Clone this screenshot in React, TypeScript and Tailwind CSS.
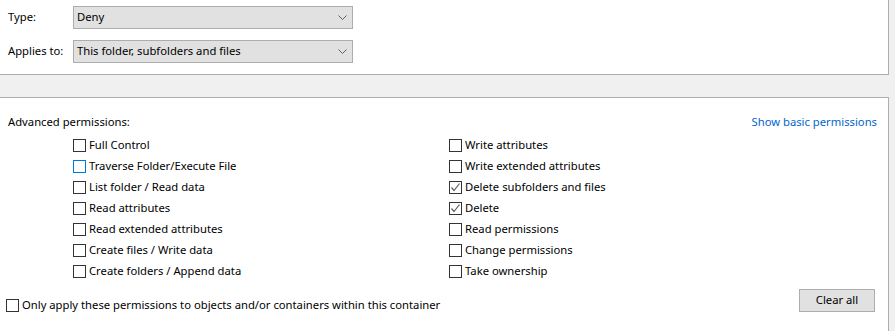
type Perm = { label: string; checked?: boolean; focused?: boolean };

const leftPerms: Perm[] = [
  { label: 'Full Control' },
  { label: 'Traverse Folder/Execute File', focused: true },
  { label: 'List folder / Read data' },
  { label: 'Read attributes' },
  { label: 'Read extended attributes' },
  { label: 'Create files / Write data' },
  { label: 'Create folders / Append data' },
];

const rightPerms: Perm[] = [
  { label: 'Write attributes' },
  { label: 'Write extended attributes' },
  { label: 'Delete subfolders and files', checked: true },
  { label: 'Delete', checked: true },
  { label: 'Read permissions' },
  { label: 'Change permissions' },
  { label: 'Take ownership' },
];

function CheckBox({ checked, focused }: { checked?: boolean; focused?: boolean }) {
  return (
    <span
      className={`flex h-[13px] w-[13px] shrink-0 items-center justify-center border bg-white ${
        focused ? 'border-[#0078d7]' : 'border-[#333333]'
      }`}
    >
      {checked && (
        <svg width="11" height="11" viewBox="0 0 11 11">
          <polyline points="1.5,5.5 4,8.5 9.5,1.5" fill="none" stroke="#606060" strokeWidth="1.2" />
        </svg>
      )}
    </span>
  );
}

function PermRow({ perm }: { perm: Perm }) {
  return (
    <div className="flex h-[21px] items-center gap-[3px]">
      <CheckBox checked={perm.checked} focused={perm.focused} />
      <span>{perm.label}</span>
    </div>
  );
}

function Combo({ value }: { value: string }) {
  return (
    <div className="flex h-[23px] w-[280px] items-center justify-between border border-[#adadad] bg-[#e1e1e1] pr-[5px] pl-[3px]">
      <span>{value}</span>
      <svg width="9" height="6" viewBox="0 0 9 6">
        <polyline points="0.5,0.5 4.5,4.5 8.5,0.5" fill="none" stroke="#606060" strokeWidth="1" />
      </svg>
    </div>
  );
}

export default function App() {
  return (
    <div
      className="flex h-[331px] w-[895px] flex-col overflow-hidden bg-[#f0f0f0] text-[11.25px] text-black"
      style={{ fontFamily: '"Noto Sans", sans-serif' }}
    >
      <div className="flex h-[75px] w-[889px] flex-col gap-[11px] border-r border-b border-[#adadad] bg-white pt-[6px]">
        <div className="flex items-center">
          <span className="w-[73px] pl-[8px]">Type:</span>
          <Combo value="Deny" />
        </div>
        <div className="flex items-center">
          <span className="w-[73px] pl-[8px]">Applies to:</span>
          <Combo value="This folder, subfolders and files" />
        </div>
      </div>

      <div className="mt-[22px] flex w-[889px] flex-1 flex-col border-t border-r border-[#adadad] bg-white">
        <div className="mt-[16px] flex h-[16px] items-center justify-between pr-[11px] pl-[8px]">
          <span>Advanced permissions:</span>
          <a className="text-[#0066cc]">Show basic permissions</a>
        </div>

        <div className="mt-[5px] flex">
          <div className="w-[449px] pl-[73px]">
            {leftPerms.map((p) => (
              <PermRow key={p.label} perm={p} />
            ))}
          </div>
          <div>
            {rightPerms.map((p) => (
              <PermRow key={p.label} perm={p} />
            ))}
          </div>
        </div>

        <div className="mt-[7px] flex items-end justify-between pr-[13px] pl-[6px]">
          <div className="flex h-[13px] items-center gap-[3px]">
            <CheckBox />
            <span>Only apply these permissions to objects and/or containers within this container</span>
          </div>
          <button className="h-[23px] w-[76px] border border-[#adadad] bg-[#e1e1e1]">Clear all</button>
        </div>
      </div>
    </div>
  );
}
